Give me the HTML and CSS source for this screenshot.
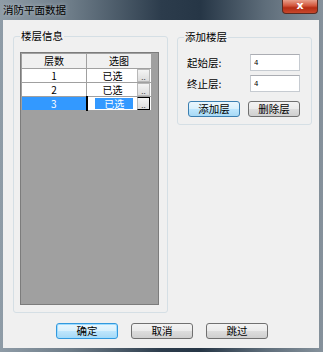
FILE: index.html
```html
<!DOCTYPE html>
<html lang="zh-CN">

<head>
    <meta charset="UTF-8">
    <title>消防平面数据</title>
    <link rel="stylesheet" href="styles.css">
</head>

<body>
    <div class="window">
        <div class="titlebar">
            <span class="title">消防平面数据</span>
            <div class="close">x</div>
        </div>
        <div class="client">
            <div class="groups">
                <div class="group floors">
                    <span class="group-title">楼层信息</span>
                    <div class="grid-area">
                        <table class="grid">
                            <tr>
                                <th>层数</th>
                                <th>选图</th>
                            </tr>
                            <tr>
                                <td>1</td>
                                <td class="pick"><span class="pick-text">已选</span><span class="dots">..</span></td>
                            </tr>
                            <tr>
                                <td>2</td>
                                <td class="pick"><span class="pick-text">已选</span><span class="dots">..</span></td>
                            </tr>
                            <tr class="selected">
                                <td>3</td>
                                <td class="pick editing"><span class="pick-text">已选</span><span class="dots">..</span></td>
                            </tr>
                        </table>
                    </div>
                </div>
                <div class="group add">
                    <span class="group-title">添加楼层</span>
                    <div class="field">
                        <label>起始层:</label>
                        <input class="num" type="text" value="4">
                    </div>
                    <div class="field">
                        <label>终止层:</label>
                        <input class="num" type="text" value="4">
                    </div>
                    <div class="actions">
                        <button class="btn hot">添加层</button>
                        <button class="btn">删除层</button>
                    </div>
                </div>
            </div>
            <div class="footer">
                <button class="btn default">确定</button>
                <button class="btn">取消</button>
                <button class="btn">跳过</button>
            </div>
        </div>
    </div>
</body>

</html>
```

FILE: styles.css
```css
* {
    padding: 0;
    margin: 0;
    box-sizing: border-box;
}

body {
    width: 323px;
    height: 352px;
    font-family: "Noto Sans CJK SC", "DejaVu Sans", sans-serif;
    font-size: 10.5px;
    color: #000;
}

.window {
    width: 323px;
    height: 352px;
    display: flex;
    flex-direction: column;
    background: linear-gradient(to right, #8f9ca7 0%, #6d7c88 22%, #2c3c4c 50%, #263646 62%, #5e6d7a 82%, #86929c 100%);
}

.titlebar {
    height: 20px;
    display: flex;
    justify-content: space-between;
    align-items: flex-start;
}

.title {
    margin: 3px 0 0 3px;
    line-height: 14px;
    color: #000;
    text-shadow: 0 0 4px rgba(225, 232, 238, 0.6);
}

.close {
    width: 36px;
    height: 14px;
    margin-right: 5px;
    border: 1px solid #5a2a20;
    border-top: none;
    border-radius: 0 0 4px 4px;
    background: linear-gradient(to bottom, #e8a08c 0%, #d2553b 45%, #b42d14 60%, #c8482c 100%);
    color: #fff;
    font-family: "DejaVu Sans", sans-serif;
    font-weight: bold;
    font-size: 11px;
    line-height: 12px;
    text-align: center;
}

.client {
    flex: 1;
    margin: 0 4px 4px 3px;
    background-color: #f0f0f0;
    padding: 16px 0 0 10px;
    display: flex;
    flex-direction: column;
}

.groups {
    display: flex;
    align-items: flex-start;
    gap: 9px;
}

.group {
    position: relative;
    border: 1px solid #d5dfe5;
    border-radius: 3px;
}

.group-title {
    position: absolute;
    top: -8px;
    left: 6px;
    padding: 0 1px;
    line-height: 14px;
    background-color: #f0f0f0;
}

.floors {
    width: 155px;
    height: 277px;
    padding: 15px 0 0 6px;
}

.grid-area {
    width: 139px;
    height: 253px;
    background-color: #a0a0a0;
    border: 1px solid #7c7c7c;
}

.grid {
    border-collapse: collapse;
    width: 130px;
    table-layout: fixed;
    font-size: 10px;
}

.grid th,
.grid td {
    width: 65px;
    border: 1px solid #a0a0a0;
    text-align: center;
    font-weight: normal;
    line-height: 12px;
    height: 14px;
    padding: 0;
}

.grid th {
    height: 15px;
    background-color: #f0f0f0;
}

.grid td {
    background-color: #fff;
}

.pick {
    position: relative;
}

.pick-text {
    display: inline-block;
    width: 46px;
    text-align: center;
    margin-right: 13px;
}

.dots {
    position: absolute;
    right: 1px;
    top: 0;
    width: 13px;
    height: 13px;
    border: 1px solid #b8b8b8;
    background: linear-gradient(to bottom, #f4f4f4, #dcdcdc);
    font-size: 8px;
    line-height: 13px;
    color: #444;
}

.selected td {
    background-color: #3399ff;
    color: #fff;
}

.selected .editing {
    background-color: #fff;
    border-left: 2px solid #000;
}

.editing .pick-text {
    background-color: #3399ff;
    color: #fff;
    margin-left: 3px;
    width: 40px;
    border: 1px solid #fff;
    line-height: 11px;
}

.editing .dots {
    border: 1px solid #000;
    border-left-color: #b8b8b8;
}

.add {
    width: 135px;
    height: 88px;
    margin-top: 1px;
    padding: 16px 0 0 9px;
    display: flex;
    flex-direction: column;
    gap: 4px;
}

.field {
    display: flex;
    align-items: center;
    height: 17px;
}

.field label {
    width: 63px;
}

.num {
    width: 50px;
    height: 17px;
    border: 1px solid #c6cbd1;
    border-top-color: #abadb3;
    background-color: #fff;
    font-family: "DejaVu Sans", sans-serif;
    font-size: 7px;
    padding-left: 3px;
    outline: none;
}

.actions {
    display: flex;
    gap: 8px;
    margin-top: 5px;
    margin-left: 1px;
}

.btn {
    width: 52px;
    height: 16px;
    font-family: "Noto Sans CJK SC", "DejaVu Sans", sans-serif;
    font-size: 10.5px;
    line-height: 12px;
    color: #000;
    border: 1px solid #707070;
    border-radius: 3px;
    background: linear-gradient(to bottom, #f3f3f3 0%, #ebebeb 48%, #dddddd 52%, #cfcfcf 100%);
}

.btn.hot {
    border-color: #3c7fb1;
    background: linear-gradient(to bottom, #eaf6fd 0%, #d9f0fc 48%, #bee6fd 52%, #a7d9f5 100%);
}

.footer {
    display: flex;
    gap: 13px;
    margin: 10px 0 0 43px;
}

.footer .btn {
    width: 62px;
}

.btn.default {
    border-color: #3399dd;
    box-shadow: inset 0 0 0 1px #9fdcff;
    background: linear-gradient(to bottom, #eaf6fd 0%, #d9f0fc 48%, #bee6fd 52%, #a7d9f5 100%);
}
```
